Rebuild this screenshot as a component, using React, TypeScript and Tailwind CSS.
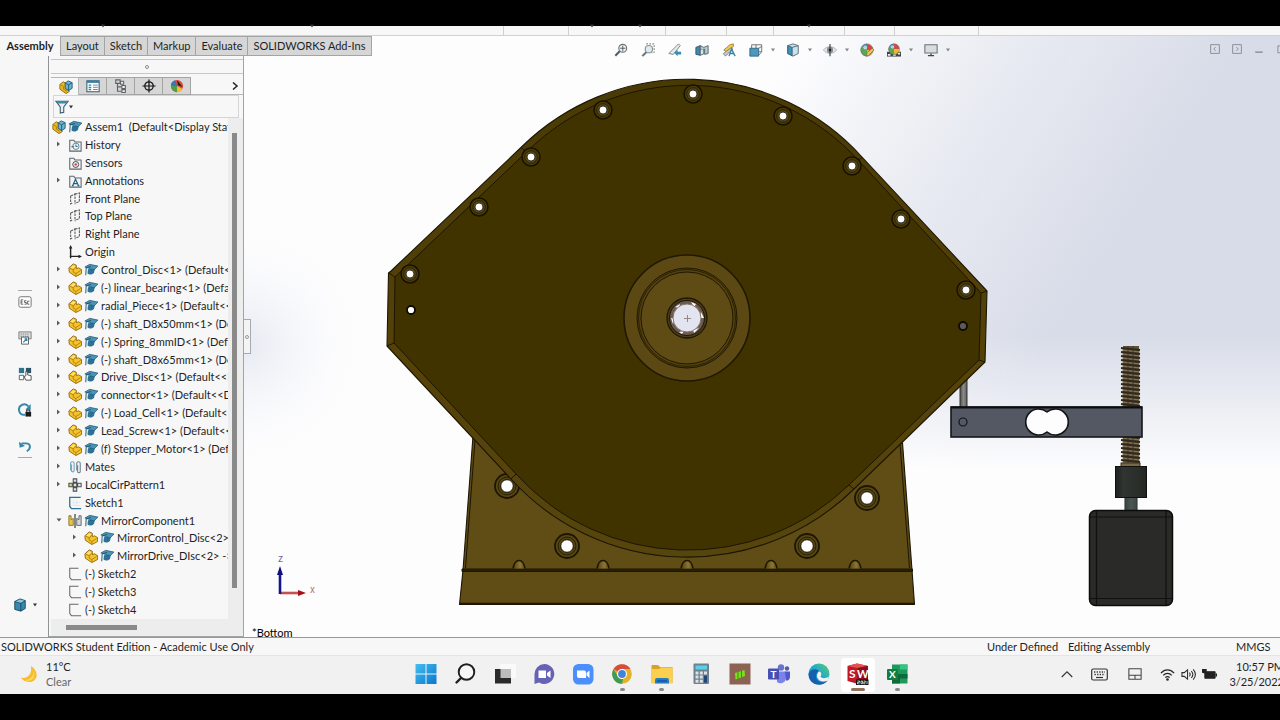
import type { ReactNode } from "react";

type IconName =
  | "assembly" | "part" | "history" | "sensors" | "annotations" | "plane" | "origin"
  | "mates" | "pattern" | "sketchBlue" | "mirror" | "sketch";

type Row = { label: string; icon: IconName; cap?: boolean; arrow?: "right" | "down"; level?: number };

const rows: Row[] = [
  { label: "Assem1  (Default<Display State-1>)", icon: "assembly", cap: true, level: -1 },
  { label: "History", icon: "history", arrow: "right" },
  { label: "Sensors", icon: "sensors" },
  { label: "Annotations", icon: "annotations", arrow: "right" },
  { label: "Front Plane", icon: "plane" },
  { label: "Top Plane", icon: "plane" },
  { label: "Right Plane", icon: "plane" },
  { label: "Origin", icon: "origin" },
  { label: "Control_Disc<1> (Default<<Default>", icon: "part", cap: true, arrow: "right" },
  { label: "(-) linear_bearing<1> (Default<<", icon: "part", cap: true, arrow: "right" },
  { label: "radial_Piece<1> (Default<<Default>", icon: "part", cap: true, arrow: "right" },
  { label: "(-) shaft_D8x50mm<1> (Default<<", icon: "part", cap: true, arrow: "right" },
  { label: "(-) Spring_8mmID<1> (Default<<", icon: "part", cap: true, arrow: "right" },
  { label: "(-) shaft_D8x65mm<1> (Default<<", icon: "part", cap: true, arrow: "right" },
  { label: "Drive_DIsc<1> (Default<<Default>", icon: "part", cap: true, arrow: "right" },
  { label: "connector<1> (Default<<Default>", icon: "part", cap: true, arrow: "right" },
  { label: "(-) Load_Cell<1> (Default<<Default>", icon: "part", cap: true, arrow: "right" },
  { label: "Lead_Screw<1> (Default<<Default>", icon: "part", cap: true, arrow: "right" },
  { label: "(f) Stepper_Motor<1> (Default<<", icon: "part", cap: true, arrow: "right" },
  { label: "Mates", icon: "mates", arrow: "right" },
  { label: "LocalCirPattern1", icon: "pattern", arrow: "right" },
  { label: "Sketch1", icon: "sketchBlue" },
  { label: "MirrorComponent1", icon: "mirror", cap: true, arrow: "down" },
  { label: "MirrorControl_Disc<2> ->", icon: "part", cap: true, arrow: "right", level: 1 },
  { label: "MirrorDrive_DIsc<2> ->", icon: "part", cap: true, arrow: "right", level: 1 },
  { label: "(-) Sketch2", icon: "sketch" },
  { label: "(-) Sketch3", icon: "sketch" },
  { label: "(-) Sketch4", icon: "sketch" },
];

function Svg({ size = 14, box = 16, children }: { size?: number; box?: number; children: ReactNode }) {
  return (
    <svg width={size} height={size} viewBox={`0 0 ${box} ${box}`} fill="none" aria-hidden="true" className="shrink-0">
      {children}
    </svg>
  );
}

function Caret({ className }: { className: string }) {
  return (
    <svg width="4" height="4" viewBox="0 0 4 4" aria-hidden="true" className={className}>
      <path d="M0 0.500H4L2 3.500Z" />
    </svg>
  );
}

const folder = <path d="M2 4V2.500H6.500L8 4.500H15V15H2Z" fill="#f2f4f5" stroke="#5e676d" strokeWidth="1.200" />;
const partShape = (
  <>
    <path d="M1 5.500L6 1L9.500 2.500V6.500L12 5.500L15.500 7.500V12L9 15.500L1.500 10.500Z" fill="#f5c32c" stroke="#8c6508" strokeWidth="1" strokeLinejoin="round" />
    <path d="M2 5.800L6 8L9 4.500M6 8V10.500L9 12L14.500 8.500M9 12V15" stroke="#a5770c" strokeWidth="0.900" />
    <path d="M3 5.300L6 2.600L8.500 3.600L6 6.200Z" fill="#ffe07a" />
  </>
);

function TreeIcon({ name }: { name: IconName }) {
  switch (name) {
    case "assembly":
      return (
        <Svg>
          <path d="M1 5L5 2L8 4V10L12 13L8 15.500L1 10.500Z" fill="#efb920" stroke="#8c6508" />
          <path d="M2 5.500L5 7.500V10.500L9 13" stroke="#a5770c" />
          <path d="M7 3.500L10.500 1L15 3V9.500L11 12L7 9.500Z" fill="#6db6d3" stroke="#1d5570" />
          <path d="M7 3.500L11 5.500L15 3M11 5.500V12" stroke="#1d5570" />
        </Svg>
      );
    case "part":
      return <Svg>{partShape}</Svg>;
    case "history":
      return <Svg>{folder}<circle cx="9" cy="9.500" r="3.600" stroke="#3f7f9a" /><path d="M9 7.500V9.700H11M3.800 10H7" stroke="#28566b" /></Svg>;
    case "sensors":
      return <Svg>{folder}<circle cx="8.800" cy="9.700" r="3.400" stroke="#383838" /><circle cx="8.800" cy="9.700" r="1.500" fill="#d84949" /></Svg>;
    case "annotations":
      return <Svg>{folder}<path d="M5.300 13.300L8.600 6L12 13.300M6.500 11H10.700M4.500 13.300H6.500M10.800 13.300H13" stroke="#1d6687" strokeWidth="1.400" /></Svg>;
    case "plane":
      return <Svg><path d="M3 4.500L8 2.500M8 1V14M3 4.500V13.500L5 12.500M8 2.500L13 1V11L8 13" stroke="#59595b" strokeWidth="1.200" strokeDasharray="3 1" /></Svg>;
    case "origin":
      return <Svg><path d="M3 15V3M2 13H14" stroke="#242424" strokeWidth="1.600" /><path d="M3 0L5 4H1ZM16 13L12 15V11Z" fill="#242424" /></Svg>;
    case "mates":
      return <Svg><path d="M3 12V4a2 2 0 0 1 4 0v8a1.500 1.500 0 0 1-3 0V5" stroke="#71a8bd" strokeWidth="1.300" /><path d="M10 12V4a2 2 0 0 1 4 0v9a1.500 1.500 0 0 1-3 0V6" stroke="#6f8792" strokeWidth="1.300" /></Svg>;
    case "pattern":
      return (
        <Svg>
          <path d="M6 1H10V5H6ZM6 11H10V15H6ZM11 6H15V10H11ZM6 6H10V10H6Z" fill="#e2e4e5" stroke="#494f53" strokeWidth="1.200" />
          <path d="M1 6H5V10H1Z" fill="#e8cf55" stroke="#494f53" strokeWidth="1.200" />
        </Svg>
      );
    case "sketchBlue":
      return <Svg><path d="M14.500 1.500H4L2 1.500V12L4 14.500H15" stroke="#2b7497" strokeWidth="1.500" /><path d="M6 4V11H14M10 4V11M6 7.500H14" stroke="#e0e5e8" /></Svg>;
    case "sketch":
      return <Svg><path d="M12 1.500H2V12L4 14.500H15" stroke="#66696c" strokeWidth="1.200" /></Svg>;
    case "mirror":
      return (
        <Svg>
          <path d="M1 2H3.500V6.500L6 5V13H1Z" fill="#ebc447" stroke="#85712d" />
          <path d="M15 2H12.500V6.500L10 5V13H15Z" fill="#d5d8db" stroke="#575c60" />
          <path d="M8 0V16" stroke="#222" strokeWidth="1.200" />
        </Svg>
      );
  }
}

function Cap() {
  return (
    <Svg>
      <path d="M4.500 7L4 12C6.500 14 10 13 11.500 11L12.500 6Z" fill="#2c7196" />
      <path d="M1 4.500L6.500 1.500L16 3.500L11.500 8Z" fill="#4a93b5" stroke="#1d5877" strokeWidth="0.800" />
      <path d="M8 4L2.500 5.500L2 14" stroke="#1d5877" strokeWidth="1.100" />
    </Svg>
  );
}

function TreeRow({ row }: { row: Row }) {
  return (
    <li className="flex min-h-0 flex-1 items-center whitespace-pre">
      {row.level === 1 && <span className="w-4 shrink-0" />}
      {row.level !== -1 && (
        <span className="flex w-4 shrink-0 justify-center pb-0.5">
          {row.arrow && (
            <svg width="6" height="6" viewBox="0 0 6 6" aria-hidden="true">
              <path d={row.arrow === "right" ? "M1 0.500L4 3L1 5.500Z" : "M0.500 1.500H5.500L3 4.500Z"} fill="#5a5a5a" />
            </svg>
          )}
        </span>
      )}
      <span className="flex w-4 shrink-0 justify-center"><TreeIcon name={row.icon} /></span>
      {row.cap && <span className="flex w-4 shrink-0 justify-center"><Cap /></span>}
      <span className="pl-0.5">{row.label}</span>
    </li>
  );
}

function Ball() {
  return (
    <>
      <path d="M8 8L2 4A7 7 0 0 1 8 1Z" fill="#3f8cc0" />
      <path d="M8 8V1A7 7 0 0 1 15 8Z" fill="#d9453b" />
      <path d="M8 8H15A7 7 0 0 1 8 15Z" fill="#e5bd32" />
      <path d="M8 8V15A7 7 0 0 1 2 4Z" fill="#57a65a" />
      <circle cx="8" cy="8" r="7" stroke="#666" strokeWidth="0.700" />
      <circle cx="6" cy="5" r="2.200" fill="#fff" opacity="0.600" />
    </>
  );
}

const viewTools: { name: string; icon: ReactNode; menu?: boolean }[] = [
  { name: "Zoom to Fit", icon: <><circle cx="10" cy="6" r="4.500" fill="#edf3f5" stroke="#6a747a" strokeWidth="1.300" /><path d="M10 3V9M7 6H13" stroke="#4a5359" /><path d="M6.500 9.500L1.500 14.500" stroke="#555d63" strokeWidth="2.400" /></> },
  { name: "Zoom to Area", icon: <><path d="M6 1H15V11H12" stroke="#666" strokeDasharray="2 1.500" /><circle cx="9" cy="7" r="4.200" fill="#dfebef" stroke="#849097" strokeWidth="1.300" /><path d="M6 10.500L1.500 15" stroke="#6b767c" strokeWidth="2.400" /></> },
  { name: "Previous View", icon: <><path d="M1 12L12 1L14 3L10 8L6 13Z" fill="#e7ebed" stroke="#727b80" /><path d="M7 11L11 8V10H15V13H11V15Z" fill="#398db3" /></> },
  { name: "Section View", icon: <><path d="M1 5L6 3V14L1 13Z" fill="#438aaa" stroke="#27546a" /><path d="M6 3L10 5L15 3V12L11 13V7L6 8Z" fill="#b9c8cf" stroke="#4c606b" /><path d="M6 8V14L10 12.500V7" fill="#dae5e9" stroke="#4c606b" /></> },
  { name: "Dynamic Annotation Views", icon: <><path d="M2 8L9 2L13 1L13 4L5 10Z" fill="#eec757" stroke="#a8802a" /><path d="M1.500 12L11 5L12 7L4 15Z" fill="#c3c9cc" stroke="#777f85" /><path d="M8 15L11 7L15 15M9 12H14" stroke="#38829f" strokeWidth="1.500" /></> },
  { name: "View Orientation", menu: true, icon: <><path d="M3 6V2H14.500V10L11 14" fill="#f8f8f8" stroke="#636a6f" /><path d="M8 2V6M11 6L14.500 4M11 10H14.500" stroke="#636a6f" /><path d="M1 6H11V15H1Z" fill="#4b9abd" stroke="#2b647e" /></> },
  { name: "Display Style", menu: true, icon: <><path d="M2 3L8 1L14 3V12L8 15L2 12Z" fill="#cfe1e8" stroke="#50646f" /><path d="M2 3L7 5V14.500L2 12Z" fill="#4192b5" stroke="#2b647e" /><path d="M7 5L14 3" stroke="#50646f" /></> },
  { name: "Hide/Show Items", menu: true, icon: <><path d="M0.500 8C4 3 12 3 15.500 8C12 13 4 13 0.500 8Z" fill="#e5e7e8" stroke="#a8adb0" /><circle cx="8" cy="8" r="3.600" fill="#8a9094" /><path d="M8 1V15" stroke="#3f4447" strokeWidth="1.300" /><circle cx="8" cy="8" r="1.500" fill="#222" /></> },
  { name: "Edit Appearance", icon: <><Ball /><path d="M7 15L8 11L14 6L16 8L10 14Z" fill="#e9c368" stroke="#7c6335" strokeWidth="0.800" /></> },
  { name: "Apply Scene", menu: true, icon: <><path d="M0 10H16V15.500H0Z" fill="#444" /><path d="M1 12.500H4V14.500H1ZM7 12.500H10V14.500H7ZM12.500 11H15V13H12.500Z" fill="#eee" /><g transform="translate(1 0) scale(.88)"><Ball /></g></> },
  { name: "View Settings", menu: true, icon: <><path d="M1 2H15V11.500H1Z" fill="#d8dcdf" stroke="#6c7276" strokeWidth="1.200" /><path d="M8 12V14.500M4.500 14.500H11.500" stroke="#444" strokeWidth="1.500" /></> },
];

const holes = [[410, 274], [479, 207], [531, 157], [603, 110], [693, 94], [783, 116], [852, 166], [901, 219], [966, 290]];
const baseHoles = [[507, 486], [567, 546], [807, 546], [867, 498]];
const notches = [519, 603, 687, 771, 855];
const threads = Array.from({ length: 30 }, (_, i) => 348 + i * 4);

function Scene() {
  return (
    <svg viewBox="244 36 1036 601" className="block h-full w-full" preserveAspectRatio="xMidYMid slice" role="img" aria-label="Assembly, bottom view">
      <defs>
        <linearGradient id="sky" gradientUnits="userSpaceOnUse" x1="790" y1="60" x2="1100" y2="260">
          <stop offset="0" stopColor="#d8dce8" stopOpacity="0" />
          <stop offset="0.500" stopColor="#d8dce8" stopOpacity="0.550" />
          <stop offset="1" stopColor="#d8dce8" />
        </linearGradient>
        <linearGradient id="fade" x1="0" y1="36" x2="0" y2="637" gradientUnits="userSpaceOnUse">
          <stop offset="0" stopColor="#fff" /><stop offset="0.500" stopColor="#fff" />
          <stop offset="0.620" stopColor="#fff" stopOpacity="0.450" /><stop offset="0.720" stopColor="#fff" stopOpacity="0" />
        </linearGradient>
        <mask id="horizon"><rect x="244" y="36" width="1036" height="601" fill="url(#fade)" /></mask>
        <radialGradient id="leftSky" cx="244" cy="345" r="130" gradientUnits="userSpaceOnUse">
          <stop offset="0" stopColor="#e6e9f2" /><stop offset="1" stopColor="#fff" stopOpacity="0" />
        </radialGradient>
        <linearGradient id="rim" x1="0" y1="80" x2="0" y2="557" gradientUnits="userSpaceOnUse">
          <stop offset="0" stopColor="#493a05" /><stop offset="0.600" stopColor="#554209" /><stop offset="1" stopColor="#57450e" />
        </linearGradient>
        <linearGradient id="coupler"><stop offset="0" stopColor="#1d211f" /><stop offset="0.250" stopColor="#303531" /><stop offset="0.750" stopColor="#2a2d2a" /><stop offset="1" stopColor="#222521" /></linearGradient>
        <linearGradient id="pin"><stop offset="0" stopColor="#4e4e4c" /><stop offset="0.500" stopColor="#8a8a88" /><stop offset="1" stopColor="#5c5c5a" /></linearGradient>
        <linearGradient id="notch"><stop offset="0" stopColor="#4e3f0f" /><stop offset="0.600" stopColor="#8c7434" /><stop offset="1" stopColor="#5e4b14" /></linearGradient>
      </defs>
      <rect x="244" y="36" width="1036" height="601" fill="#fdfdfe" />
      <rect x="244" y="36" width="1036" height="601" fill="url(#sky)" mask="url(#horizon)" />
      <rect x="244" y="200" width="140" height="290" fill="url(#leftSky)" />

      <rect x="960" y="378" width="7" height="30" fill="url(#pin)" stroke="#333" strokeWidth="1" />

      <g stroke="#1c1603" strokeWidth="1.100" strokeLinejoin="round">
        <path d="M473 436H902L912 570L914.500 604.500H459.500L463 570Z" fill="#604d15" />
        <path d="M475 440L465.500 568M900 444L909.500 568" fill="none" strokeWidth="1" />
        <path d="M462 569H912.500V571.500H462Z" fill="#2a210a" strokeWidth="1" />
        <path d="M460 603.500H914" strokeWidth="1.600" />
        {notches.map((x) => (
          <path key={x} d={`M${x - 6} 568.500C${x - 5} 563 ${x - 3} 560.500 ${x} 560.500S${x + 5} 563 ${x + 6} 568.500`} fill="url(#notch)" strokeWidth="1.400" />
        ))}
        {baseHoles.map(([x, y]) => (
          <g key={x}>
            <circle cx={x} cy={y} r="12" fill="#5a4813" strokeWidth="1.800" />
            <circle cx={x} cy={y} r="9" fill="#544310" strokeWidth="0.800" />
          </g>
        ))}
        <path d="M391 271L522 146.500A236 236 0 0 1 862 157L987 291L985 362L855 488A238 238 0 0 1 511 479L387 346L388.500 273Z" fill="url(#rim)" />
        <path d="M395 277L526 152.500A230 230 0 0 1 859 161L981 293L979 360L849 485A232 232 0 0 1 516 474L394 343Z" fill="#413300" strokeWidth="1" />
        <path d="M389 273L395 277M387 346L394 343M521 147L527 153M862 157L858 161M987 291L981 293M985 362L979 360M854 489L849 485M511 479L516 474" fill="none" strokeWidth="1" />
      </g>
      {baseHoles.map(([x, y]) => <circle key={x} cx={x} cy={y} r="6.300" fill="#fff" stroke="#151002" strokeWidth="1" />)}

      {holes.map(([x, y]) => (
        <g key={x}>
          <circle cx={x} cy={y} r="9" fill="#4a3b05" stroke="#171100" strokeWidth="1.500" />
          <circle cx={x} cy={y} r="6.300" fill="#574611" stroke="#221a02" strokeWidth="0.800" />
          <circle cx={x} cy={y} r="4" fill="#fff" stroke="#111" strokeWidth="0.800" />
        </g>
      ))}
      <circle cx="411" cy="310" r="4" fill="#fff" stroke="#0d0a00" strokeWidth="1.800" />
      <circle cx="963" cy="326" r="4" fill="#5c5b5c" stroke="#0d0a00" strokeWidth="1.800" />

      <g fill="none" stroke="#1f1804">
        <circle cx="687" cy="318" r="63" fill="#5b4812" strokeWidth="1.600" />
        <circle cx="687" cy="318" r="50" fill="#54410d" />
        <circle cx="687" cy="318" r="48.500" strokeWidth="0.800" />
        <circle cx="687" cy="318" r="46" fill="#5f4c15" />
        <circle cx="687" cy="318" r="20" fill="#4b3b1b" strokeWidth="1.300" />
        <circle cx="687" cy="318" r="17.500" fill="#6c5b4f" />
      </g>
      <path d="M691 302L696 304L694 307ZM701 312L704 318L700 318ZM699 328L694 333L693 330ZM682 334L679 332L684 331ZM673 324L671 318L675 319ZM675 307L680 304L679 308Z" fill="#fff" />
      <circle cx="687" cy="318" r="14" fill="#e2e5ef" stroke="#81776e" strokeWidth="1" />
      <path d="M687.500 315V322M684 318.500H691" stroke="#8f8a88" strokeWidth="1" />

      <rect x="1123" y="346" width="16" height="121" fill="#5d5138" />
      {threads.map((y) => (
        <g key={y}>
          <path d={`M1121 ${y}L1140 ${y + 2}`} stroke="#30291b" strokeWidth="1.800" />
          <path d={`M1122 ${y + 2}L1140 ${y + 4}`} stroke="#8a7b5c" strokeWidth="0.900" />
        </g>
      ))}
      <path d="M1128 346V466M1133 346V466" stroke="#40362a" strokeWidth="1" strokeDasharray="2 2" />
      <rect x="1121" y="463" width="19" height="4" fill="#7b6847" stroke="#3a3020" strokeWidth="1" />
      <rect x="951" y="407" width="191" height="30" fill="#545862" stroke="#15171b" strokeWidth="1.600" />
      <path d="M951 407.500H1142" stroke="#0c0d10" strokeWidth="2" />
      <path d="M1047 412A13 13 0 1 0 1047 432A13 13 0 1 0 1047 412Z" fill="#fdfdfe" stroke="#111318" strokeWidth="1.600" />
      <circle cx="963" cy="422" r="4" fill="none" stroke="#111318" strokeWidth="1.200" />

      <rect x="1125" y="497" width="12" height="14" fill="url(#pin)" stroke="#202522" strokeWidth="1" />
      <rect x="1125" y="497" width="12" height="14" fill="#30413c" opacity="0.700" />
      <rect x="1115.500" y="466.500" width="31" height="31" fill="url(#coupler)" stroke="#111" strokeWidth="1" />
      <rect x="1089.500" y="510.500" width="83" height="95" rx="6" fill="#2a2b28" stroke="#0b0c0a" strokeWidth="1.500" />
      <path d="M1096.500 511V605M1166 511V605M1090 517H1172M1090 598.500H1172" stroke="#111210" strokeWidth="1.200" />

      <path d="M280 593H299" stroke="#c65050" strokeWidth="2.600" />
      <path d="M306 593L298 590V596Z" fill="#a50f18" />
      <path d="M280 594V573" stroke="#15158c" strokeWidth="2.600" />
      <path d="M280 566L283 575H277Z" fill="#10107d" />
      <text x="278" y="562" fontSize="10" className="fill-[#6a6aa8] font-[Roboto,sans-serif]">z</text>
      <text x="310" y="593" fontSize="10" className="fill-[#b87880] font-[Roboto,sans-serif]">x</text>
      <text x="252" y="637" fontSize="11" className="fill-black font-[Lato,sans-serif]">*Bottom</text>
    </svg>
  );
}

const taskApps: { name: string; icon: ReactNode; state?: "open" | "active" }[] = [
  { name: "Start", icon: <><defs><linearGradient id="win" x1="0" y1="0" x2="1" y2="1"><stop stopColor="#45bdf0" /><stop offset="1" stopColor="#0878cf" /></linearGradient></defs><path d="M1.500 2H11.500V11.500H1.500ZM12.500 2H22.500V11.500H12.500ZM1.500 12.500H11.500V22H1.500ZM12.500 12.500H22.500V22H12.500Z" fill="url(#win)" /></> },
  { name: "Search", icon: <><circle cx="13.500" cy="10" r="7.800" stroke="#1f1f1f" strokeWidth="1.900" fill="#f7f7f7" /><path d="M8 16L3.500 20.500" stroke="#1f1f1f" strokeWidth="2.400" strokeLinecap="round" /></> },
  { name: "Task View", icon: <><path d="M7 2H23V16H7Z" fill="#fafafa" /><path d="M2 7H18V21.500H2Z" fill="#2a2a2a" /><path d="M7.500 7H18V16H7.500Z" fill="#bcbcbc" /></> },
  { name: "Chat", icon: <><path d="M12.500 2A10 10 0 1 1 7 20.500L2.500 22V12A10 10 0 0 1 12.500 2Z" fill="#6762b5" /><path d="M6.500 8.500H14V16H6.500ZM15 11L18.500 8.500V16L15 13.500Z" fill="#fff" /></> },
  { name: "Zoom", icon: <><rect x="2" y="2" width="20.500" height="20.500" rx="5.500" fill="#4a8ffb" /><path d="M6 8.500H13a2 2 0 0 1 2 2V16H8a2 2 0 0 1-2-2ZM15.500 11L18.500 8.500V16L15.500 13.500Z" fill="#fff" /></> },
  { name: "Chrome", state: "open", icon: <><circle cx="12" cy="12" r="9.800" fill="#e2b32a" /><path d="M12 12L3.500 7.100A9.800 9.800 0 0 1 20.500 7.100H12Z" fill="#d54e3d" /><path d="M12 21.800A9.800 9.800 0 0 1 3.500 7.100L7.800 14.400A5 5 0 0 0 13 17Z" fill="#3d9b58" /><circle cx="12" cy="12" r="5" fill="#fff" /><circle cx="12" cy="12" r="3.900" fill="#4384da" /></> },
  { name: "File Explorer", state: "open", icon: <><path d="M1.500 3H8L10 5H22.500V21H1.500Z" fill="#dba126" /><path d="M1.500 7H9L11 5.500H22.500V21.500H1.500Z" fill="#fbd04f" /><path d="M5 21.500V18a2 2 0 0 1 2-2H17a2 2 0 0 1 2 2V21.500Z" fill="#267cc4" /><path d="M7 19H17" stroke="#17598f" strokeWidth="1.500" /></> },
  { name: "Calculator", icon: <><rect x="4.500" y="1.500" width="15.500" height="20.500" rx="1" fill="#6e818d" /><path d="M6.500 3.500H18V7.500H6.500Z" fill="#59cfe8" /><path d="M6.500 9.500H9.500V12.500H6.500ZM10.800 9.500H13.800V12.500H10.800ZM15 9.500H18V12.500H15ZM6.500 13.600H9.500V16.600H6.500ZM10.800 13.600H13.800V16.600H10.800ZM6.500 17.700H9.500V20.700H6.500ZM10.800 17.700H13.800V20.700H10.800Z" fill="#dce2e5" /><path d="M15 13.600H18V20.700H15Z" fill="#1f4676" /></> },
  { name: "Code Composer", icon: <><path d="M1.500 1.500H22.500V22.500H1.500Z" fill="#8c6353" /><path d="M7 11L16.500 8L17 14L7.500 17.500Z" fill="#7be01c" /><path d="M10 10.200V16.500M13.500 9V15.500" stroke="#3a8c14" /></> },
  { name: "Teams", icon: <><circle cx="14" cy="5.500" r="3.200" fill="#6b72cc" /><circle cx="20" cy="6.500" r="2.200" fill="#5059b8" /><path d="M10 9.500H19V16a5.500 5.500 0 0 1-9 4Z" fill="#7b83eb" /><path d="M18 9.500H23V15a3.500 3.500 0 0 1-4 3.500Z" fill="#5059c9" /><rect x="1" y="6.500" width="11" height="11" rx="1" fill="#4650b4" /><text x="3.500" y="15.500" fontSize="10" fontWeight="700" fill="#fff">T</text></> },
  { name: "Edge", icon: <><defs><linearGradient id="edge" x1="0" y1="1" x2="1" y2="0"><stop stopColor="#2187d5" /><stop offset="0.500" stopColor="#22a7cf" /><stop offset="1" stopColor="#58d06a" /></linearGradient></defs><circle cx="12" cy="12" r="10.500" fill="url(#edge)" /><path d="M1.500 12C3 7 9 6 12 9C8 11 8 17 12 19.500C15 21 18 20 20.500 18.500C17 23.500 10 23.500 6 21C3 19 1.500 16 1.500 12Z" fill="#1561ae" /><path d="M12 9.500C15 10 14.500 13 13.500 14.500C15 17 19 16.500 22 14.500L20.500 18.500C15 21 10 18 10 14C10 12 11 10 12 9.500Z" fill="#f2f2f2" /></> },
  { name: "SOLIDWORKS", state: "active", icon: <><path d="M1.500 4L11 1.500L22 4V19L12 22L1.500 19Z" fill="#c01824" /><path d="M1.500 4L11 1.500L22 4L11.500 6Z" fill="#e45252" /><path d="M11.500 6V22L22 19V4Z" fill="#8c0f19" /><text x="3" y="16" fontSize="12" fontWeight="700" fill="#fff">S</text><text x="11" y="16" fontSize="11" fontWeight="700" fill="#fff">W</text><path d="M10 17.500H22.500V23H10Z" fill="#111" /><path d="M11.500 19H13.500V20.300H11.500V21.800H13.500M15 19H16.500V21.700H15ZM17.700 19H19.300V20.300H17.700V21.800H19.500M21 19V22" stroke="#fff" strokeWidth="0.700" /></> },
  { name: "Excel", state: "open", icon: <><path d="M7 2.500H22.500V21.500H7Z" fill="#1b9a5b" /><path d="M15 2.500H22.500V7.500H15Z" fill="#37c481" /><path d="M7 12H15V21.500H7ZM15 12H22.500V16.500H15Z" fill="#0f6a3b" /><rect x="2" y="7" width="11" height="11" rx="1" fill="#127c41" /><text x="4" y="16" fontSize="10" fontWeight="700" fill="#fff">X</text></> },
];

const tabs = ["Layout", "Sketch", "Markup", "Evaluate", "SOLIDWORKS Add-Ins"];

const panelTabs: { name: string; icon: ReactNode }[] = [
  { name: "PropertyManager", icon: <><path d="M1 2H15V14.500H1Z" fill="#fff" stroke="#345e75" strokeWidth="1.200" /><path d="M1 2H15V4.500H1Z" fill="#3684a8" /><path d="M3 7H6M3 9.500H6M3 12H6" stroke="#3684a8" strokeWidth="1.500" /><path d="M8 7H13.500M8 9.500H13.500M8 12H13.500" stroke="#777" /></> },
  { name: "ConfigurationManager", icon: <><path d="M2 1H7V5H2ZM4 5V14H9M4 9H9" stroke="#5f6366" strokeWidth="1.300" /><path d="M7.500 2.500H11V6H7.500ZM9 7.500H13V11H9ZM9 12.200H13V15.500H9Z" fill="#eee" stroke="#5f6366" strokeWidth="1.200" /></> },
  { name: "DimXpertManager", icon: <><circle cx="8" cy="8" r="4.800" stroke="#161616" strokeWidth="1.500" /><path d="M8 0.500V15.500M0.500 8H15.500" stroke="#161616" strokeWidth="1.400" /></> },
  { name: "DisplayManager", icon: <><circle cx="8" cy="8" r="7" fill="#e2483e" /><path d="M8 8L1 8A7 7 0 0 0 8 15Z" fill="#4f9c4b" /><path d="M8 8V15A7 7 0 0 0 14 11Z" fill="#ebc231" /><path d="M8 8L1 7A7 7 0 0 1 6 1.500Z" fill="#3878b7" /><path d="M8 1L14.500 9L9 7Z" fill="#222" /></> },
];

export default function App() {
  return (
    <div className="flex h-screen flex-col overflow-hidden bg-black py-[26px] font-[Lato,'Noto_Sans',sans-serif] text-[11px] leading-4 text-[#1f1f1f]">
      <div className="flex h-2.5 shrink-0 items-start border-b border-[#cfd2d2] bg-[#f7f7f7]">
        <span className="flex h-full w-[504px] gap-[205px] border-r border-[#cfcfcf] pl-[101px]"><Caret className="-mt-0.5 fill-[#333]" /><Caret className="-mt-0.5 fill-[#333]" /></span>
        <span className="h-full w-[65px] border-r border-[#cfcfcf]" />
        <span className="flex h-full w-[97px] gap-11 border-r border-[#cfcfcf] pl-[21px]"><Caret className="-mt-0.5 fill-[#333]" /><Caret className="-mt-0.5 fill-[#333]" /></span>
        <span className="h-full w-[61px] border-r border-[#cfcfcf]" />
        <span className="h-full w-[47px] border-r border-[#cfcfcf]" />
        <span className="flex h-full w-[71px] justify-center border-r border-[#cfcfcf]"><Caret className="-mt-0.5 fill-[#333]" /></span>
        <span className="h-full w-[50px] border-r border-[#cfcfcf]" />
        <span className="h-full w-[84px] border-r border-[#cfcfcf]" />
      </div>

      <main className="grid min-h-0 flex-1 grid-cols-[49px_195px_minmax(0,1fr)] grid-rows-[20px_minmax(0,1fr)] bg-[#f7f7f7]">
        <section className="relative col-start-3 row-span-2 row-start-1 min-h-0 overflow-hidden">
          <Scene />
          <div className="absolute inset-x-0 top-1.5 flex h-4 items-center pl-[370px]" role="toolbar" aria-label="View tools">
            <div className="flex items-center gap-[13px]">
              {viewTools.map((t) => (
                <button key={t.name} type="button" aria-label={t.name} className={t.menu ? "-mr-0.5 flex items-center gap-2" : "flex items-center"}>
                  <Svg>{t.icon}</Svg>
                  {t.menu && <Caret className="fill-[#858585]" />}
                </button>
              ))}
            </div>
            <div className="-mr-1.5 ml-auto flex items-center gap-3 pb-0.5">
              <button type="button" aria-label="Previous window"><Svg size={10}><path d="M1 1H15V15H1ZM9 5L6 8L9 11" stroke="#8a8c92" strokeWidth="1.500" /></Svg></button>
              <button type="button" aria-label="Next window"><Svg size={10}><path d="M1 1H15V15H1ZM7 5L10 8L7 11" stroke="#8a8c92" strokeWidth="1.500" /></Svg></button>
              <button type="button" aria-label="Minimize"><Svg size={10}><path d="M2 13H14" stroke="#777a80" strokeWidth="1.800" /></Svg></button>
              <button type="button" aria-label="Restore"><Svg size={10}><path d="M3 3H14V14H3Z" stroke="#8a8c92" strokeWidth="1.500" /></Svg></button>
            </div>
          </div>
          <button type="button" aria-label="Collapse panel" className="absolute top-[283px] left-0 flex h-[35px] w-[7px] items-center justify-center border border-l-0 border-[#a7a9ac] bg-[#f4f4f5]">
            <span className="size-1 rounded-full border border-[#999]" />
          </button>
        </section>

        <nav className="z-10 col-span-3 col-start-1 row-start-1 flex w-max" aria-label="Command tabs">
          <button type="button" className="w-[61px] border-r border-[#a3a5a5] bg-[#f7f7f7] text-center font-bold">Assembly</button>
          {tabs.map((t) => (
            <button key={t} type="button" className="border border-l-0 border-[#a3a5a5] bg-[#d6d6d6] px-[5px]">{t}</button>
          ))}
        </nav>

        <aside className="col-start-1 row-start-2 flex flex-col items-center border-r border-[#8f9393] bg-[#f7f7f7] pt-[234px] pl-0.5" aria-label="Shortcuts">
          <div className="flex flex-col items-center gap-[22px] border-y border-[#a9a9a9] py-1">
            <button type="button" aria-label="Escape"><Svg><rect x="1" y="2" width="14" height="12" rx="2" fill="#fff" stroke="#666" /><path d="M6 5.500H3.500V10.500H6M3.500 8H5.500M9.500 6.500H7.500V8.500H9.500V10.500H7.500M13 7H11V10.500H13" stroke="#444" strokeWidth="0.900" /></Svg></button>
            <button type="button" aria-label="Shortcut keys"><Svg><path d="M1 1H15V9H1Z" fill="#dcdcdc" stroke="#777" /><path d="M3 3.500H13M3 6H13" stroke="#777" strokeDasharray="1.500 1" /><path d="M4 7H12V15H4Z" fill="#fff" stroke="#555" /><path d="M6 13L10 9M7.500 9H10V11.500" stroke="#2680a6" strokeWidth="1.400" /></Svg></button>
            <button type="button" aria-label="Select components"><Svg><path d="M1 1H7V7H1Z" fill="#2f748f" /><path d="M9 1H15V7H9Z" fill="#2f5468" /><path d="M1.500 9.500H6.500V14.500H1.500Z" fill="#fff" stroke="#555" /><path d="M9 15L7 11L9 10V5H11V9L15 10V15Z" fill="#fff" stroke="#444" /></Svg></button>
            <button type="button" aria-label="Lock rebuild"><Svg><path d="M12 4A6 6 0 1 0 8 13.500" stroke="#3487aa" strokeWidth="2.200" /><path d="M14.500 1V7.500H8.500Z" fill="#3487aa" /><path d="M8.500 10H15V15.500H8.500Z" fill="#1b1b1b" /><path d="M10 10V8H13.500V10" stroke="#1b1b1b" strokeWidth="1.200" /></Svg></button>
            <button type="button" aria-label="Undo"><Svg><path d="M4 5H9C15 5 15 11 10 14" stroke="#3487aa" strokeWidth="2.200" /><path d="M1 3L2 10L8 8Z" fill="#3487aa" /></Svg></button>
          </div>
          <button type="button" aria-label="View cube" className="mt-auto mb-[25px] flex items-center gap-1.5">
            <Svg><path d="M2 4L8 1L14 3V12L9 15L2 13Z" fill="#3b86ad" stroke="#16455e" /><path d="M2 4L9 6L14 3M9 6V15" stroke="#16455e" /><path d="M3 4L8 1.700L13 3L9 5.300Z" fill="#8fc6dc" /></Svg>
            <Caret className="fill-[#333]" />
          </button>
        </aside>

        <section className="col-start-2 row-start-2 flex min-h-0 flex-col border-r border-b border-[#a0a4a6] bg-[#f7f7f7] pl-0.5" aria-label="FeatureManager design tree">
          <div className="mt-[3px] flex h-[15px] shrink-0 items-center justify-center border-y border-[#c6c8c8]">
            <span className="size-1 rounded-full border border-[#8d8d8d]" />
          </div>
          <div className="mt-[3px] flex h-[18px] shrink-0">
            <button type="button" aria-label="FeatureManager" className="flex w-7 items-center justify-center border-t border-r border-[#b5b7b7] pl-0.5"><TreeIcon name="assembly" /></button>
            {panelTabs.map((t) => (
              <button key={t.name} type="button" aria-label={t.name} className="flex w-[28px] items-center justify-center border border-l-0 border-[#a3a5a5] bg-[#d6d6d6]"><Svg>{t.icon}</Svg></button>
            ))}
            <span className="flex flex-1 border-b border-[#b5b7b7]">
              <button type="button" aria-label="More tabs" className="ml-auto flex items-center pr-1"><Svg size={8}><path d="M4 1L12 8L4 15" stroke="#222" strokeWidth="3" /></Svg></button>
            </span>
          </div>
          <label className="mr-1 ml-0.5 flex h-[23px] shrink-0 items-center gap-0 border border-[#d3d6d8] pl-px">
            <Svg><path d="M1 1.500H15L10 8V14L6 15V8Z" fill="#e9eff2" stroke="#355a6d" strokeWidth="1.200" /><path d="M1 1.500H15L13 4H3Z" fill="#4088a8" /></Svg>
            <Caret className="fill-[#333]" />
            <input type="text" aria-label="Filter tree" className="w-0 min-w-0 flex-1 bg-transparent outline-none" />
          </label>
          <div className="flex min-h-0 flex-1">
            <ul className="flex min-w-0 flex-1 flex-col overflow-hidden">
              {rows.map((r) => <TreeRow key={r.label} row={r} />)}
            </ul>
            <div className="flex w-[15px] shrink-0 bg-[#ededed] pt-[15px] pr-1.5 pb-[31px] pl-1"><span className="w-full bg-[#8a8a8a]" /></div>
          </div>
          <div className="flex h-[17px] shrink-0 items-start bg-[#ededed] pt-1.5 pl-[15px]"><span className="h-[5px] w-[71px] bg-[#8a8a8a]" /></div>
        </section>
      </main>

      <footer className="flex h-[18px] shrink-0 items-center border-t border-[#959a98] bg-[#f7f7f7] pl-px">
        <span>SOLIDWORKS Student Edition - Academic Use Only</span>
        <span className="ml-auto w-[81px]">Under Defined</span>
        <span className="w-[168px]">Editing Assembly</span>
        <span className="w-[44px]">MMGS</span>
      </footer>

      <div className="flex min-h-[39px] shrink-0 items-stretch overflow-hidden border-t border-[#e4e4e4] bg-[#f1f1f1]">
        <button type="button" className="flex w-[409px] items-center gap-2 pb-0.5 pl-5 text-left leading-[15px]">
          <Svg size={18} box={20}><path d="M12 1C20 5 21 16 13 18.500C8 20 3 17.500 1 14C8 16 14 10 12 1Z" fill="#f6bd2d" /><path d="M13 3C17 8 15 15 6 17C13 19.500 20 13 13 3Z" fill="#ffdb58" /></Svg>
          <span><span className="block">11°C</span><span className="block text-[#666]">Clear</span></span>
        </button>
        <nav className="flex w-[505px] justify-between" aria-label="Taskbar">
          {taskApps.map((a) => (
            <button key={a.name} type="button" aria-label={a.name} className={a.state === "active" ? "mt-0.5 mb-0.5 flex w-[34px] flex-col items-center rounded bg-white pt-1" : "mt-0.5 mb-0.5 flex w-[34px] flex-col items-center rounded pt-1"}>
              <Svg size={24} box={24}>{a.icon}</Svg>
              {a.state === "open" && <span className="mt-auto mb-px h-[3px] w-[5px] rounded-full bg-[#8a8a8a]" />}
              {a.state === "active" && <span className="mt-auto mb-px h-[3px] w-3.5 rounded-full bg-[#936f5c]" />}
            </button>
          ))}
        </nav>
        <div className="-mr-1 ml-auto flex items-center pb-0.5">
          <button type="button" aria-label="Show hidden icons" className="mr-[18px]"><Svg size={12}><path d="M1 12L8 5L15 12" stroke="#333" strokeWidth="1.500" /></Svg></button>
          <button type="button" aria-label="Touch keyboard" className="mr-5"><Svg size={17} box={17}><rect x="0.700" y="3" width="15.600" height="11" rx="1.500" stroke="#333" strokeWidth="1.200" /><path d="M3 6H14M3.500 8.500H14" stroke="#333" strokeWidth="1.300" strokeDasharray="1.300 1.300" /><path d="M5 11.500H12" stroke="#333" strokeWidth="1.200" /></Svg></button>
          <button type="button" aria-label="Touchpad" className="mr-[18px]"><Svg size={14}><path d="M1 2H15V14H1ZM1 9.500H15M8 9.500V14" stroke="#444" strokeWidth="1.200" /></Svg></button>
          <button type="button" aria-label="Network, volume, battery" className="mr-3 flex items-center gap-1.5">
            <Svg size={15}><path d="M1 6.500C5 2 11 2 15 6.500M3.500 9C6 6 10 6 12.500 9M5.700 11.300C7 9.800 9 9.800 10.300 11.300" stroke="#2a2a2a" strokeWidth="1.400" /><circle cx="8" cy="13.300" r="1.400" fill="#2a2a2a" /></Svg>
            <Svg size={15}><path d="M1 6H3.500L7 3V13L3.500 10H1Z" stroke="#2a2a2a" strokeWidth="1.100" /><path d="M9 6C10 7.300 10 8.700 9 10M11 4.300C13 6.500 13 9.500 11 11.700M13 2.500C16 6 16 10 13 13.500" stroke="#2a2a2a" strokeWidth="1.100" /></Svg>
            <Svg size={15}><path d="M3 5H14V12H3Z" fill="#222" stroke="#222" /><path d="M14.500 7H16V10H14.500Z" fill="#222" /><path d="M0 2H5V6L3 7L0 6Z" fill="#222" /></Svg>
          </button>
          <span className="text-right leading-[15px]"><span className="block">10:57 PM</span><span className="block">3/25/2022</span></span>
        </div>
      </div>
    </div>
  );
}
